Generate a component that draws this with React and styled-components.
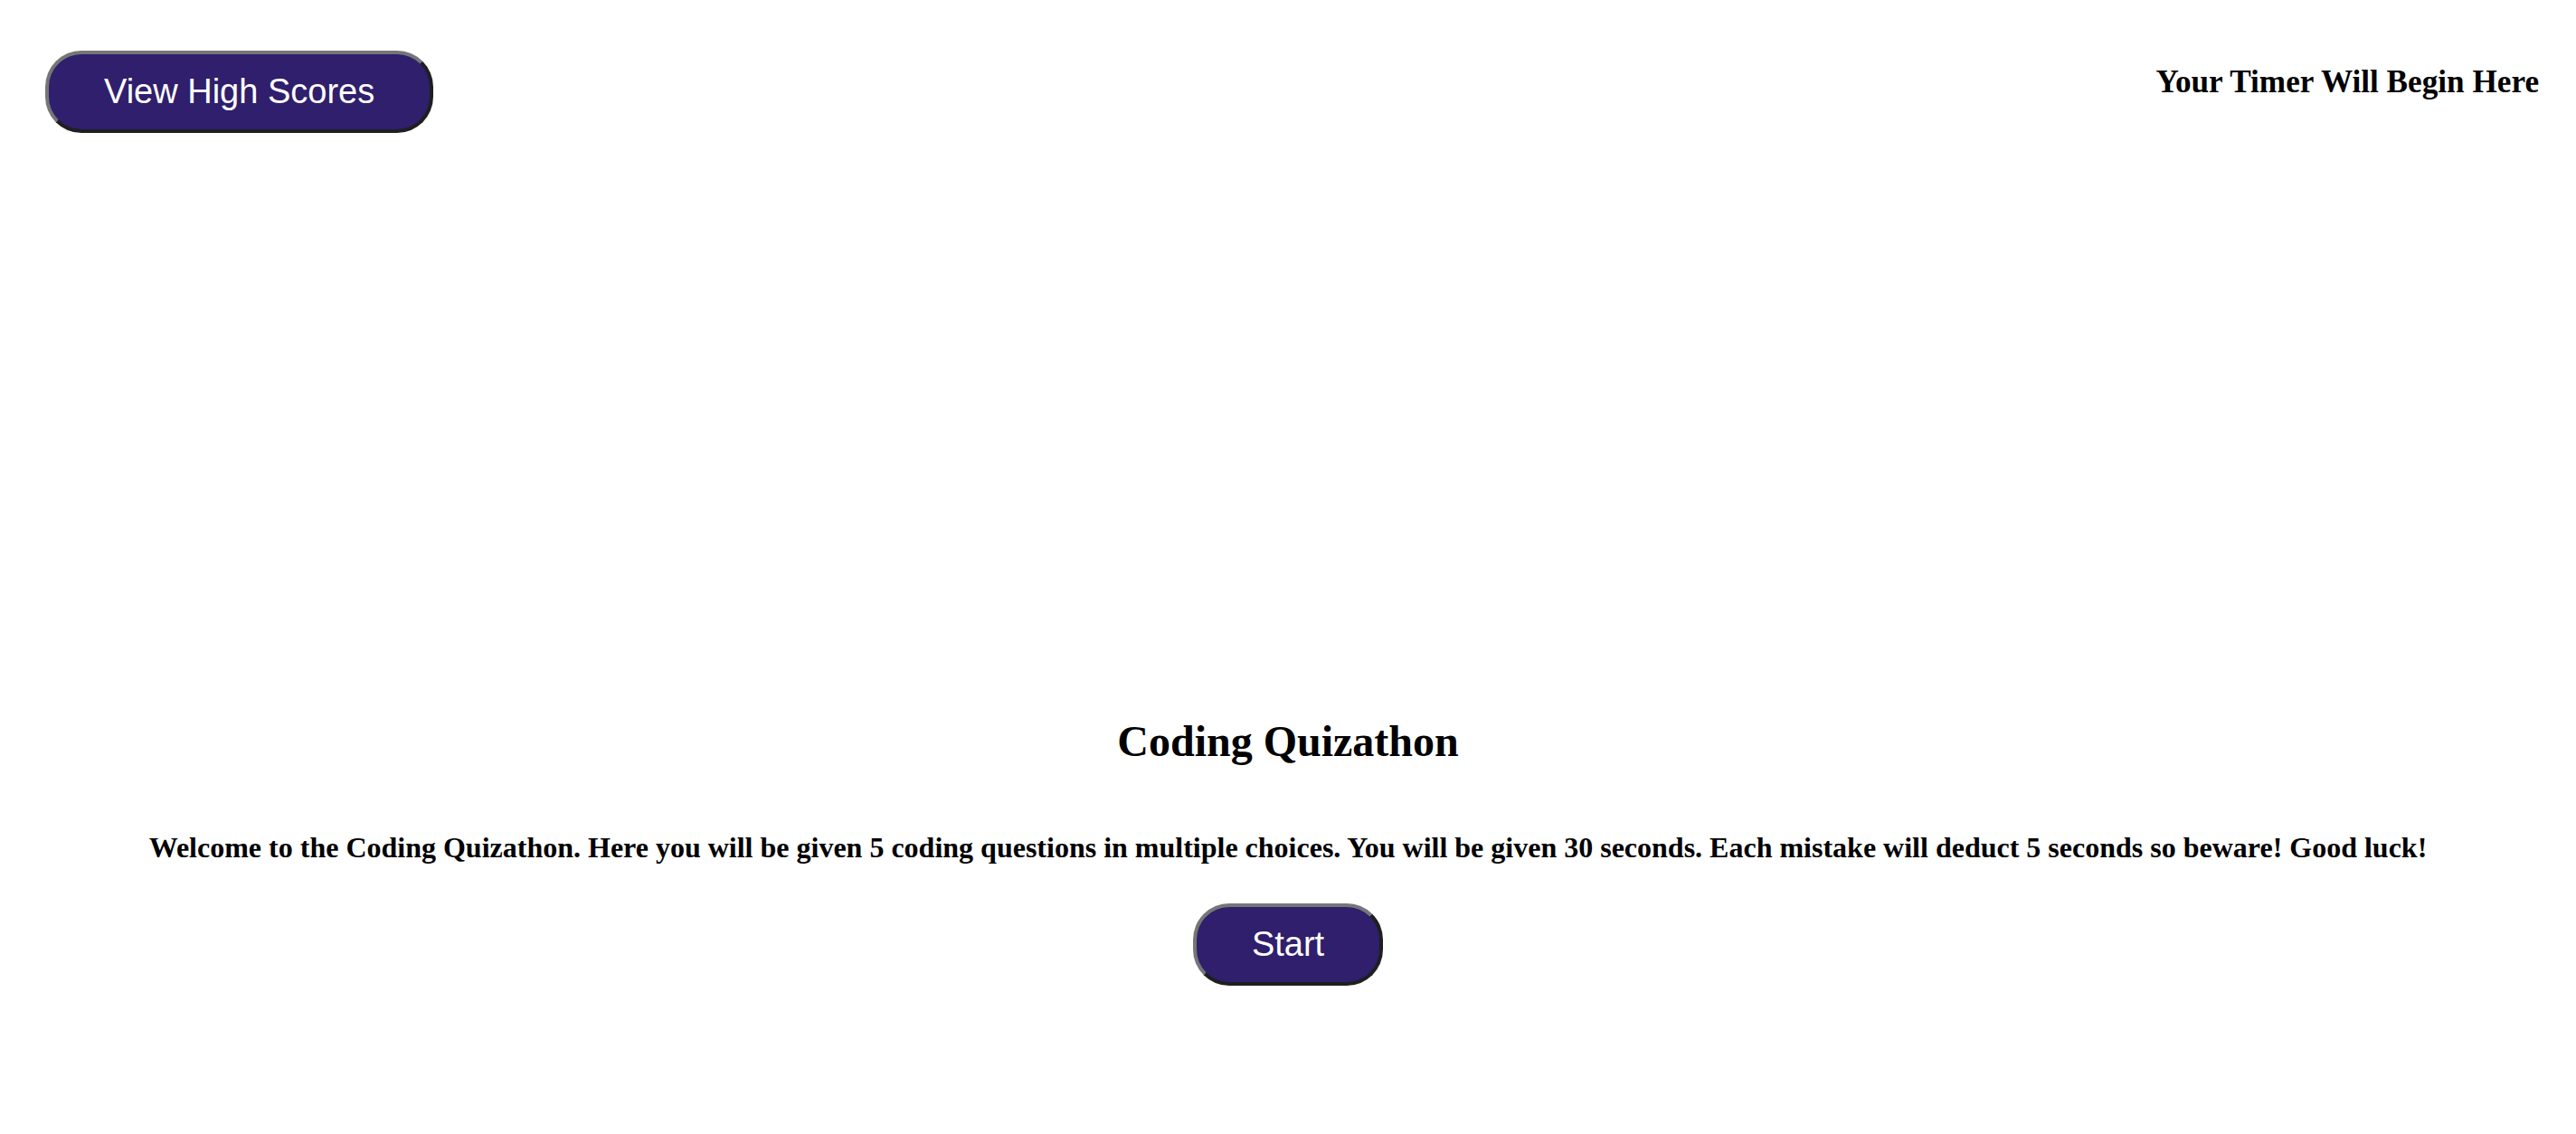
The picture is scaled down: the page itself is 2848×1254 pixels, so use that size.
import React from "react";
import styled, { createGlobalStyle } from "styled-components";

const GlobalStyle = createGlobalStyle`
  html, body {
    margin: 0;
    padding: 0;
    background: #ffffff;
    color: #000000;
    font-family: "Liberation Serif", "Times New Roman", serif;
  }
`;

const Page = styled.div`
  width: 100%;
  min-height: 1254px;
  display: flex;
  flex-direction: column;
`;

const Header = styled.header`
  display: flex;
  justify-content: space-between;
  align-items: flex-start;
  padding: 56px 41px 0 50px;
`;

const PillButton = styled.button`
  font-family: "Liberation Sans", Arial, sans-serif;
  font-size: 38px;
  line-height: 43px;
  color: #ffffff;
  background: #2f1f6c;
  border-width: 4px;
  border-style: solid;
  border-color: #767676 #1f1f1f #1f1f1f #767676;
  border-radius: 40px;
  padding: 20px 61px 20px 61px;
  cursor: pointer;
`;

const Timer = styled.h3`
  margin: 15px 0 0 0;
  font-size: 35.2px;
  font-weight: bold;
  line-height: normal;
`;

const Main = styled.main`
  display: flex;
  flex-direction: column;
  align-items: center;
  padding-top: 645px;
  text-align: center;
`;

const Title = styled.h2`
  margin: 0;
  font-size: 48px;
  font-weight: bold;
  line-height: normal;
`;

const Intro = styled.p`
  margin: 72px 0 0 0;
  font-size: 32px;
  font-weight: bold;
  line-height: normal;
  white-space: nowrap;
`;

const StartRow = styled.div`
  margin-top: 43px;
`;

export default function App() {
  return (
    <Page>
      <GlobalStyle />
      <Header>
        <PillButton>View High Scores</PillButton>
        <Timer>Your Timer Will Begin Here</Timer>
      </Header>
      <Main>
        <Title>Coding Quizathon</Title>
        <Intro>
          Welcome to the Coding Quizathon. Here you will be given 5 coding questions in multiple choices. You will be given 30 seconds. Each mistake will deduct 5 seconds so beware! Good luck!
        </Intro>
        <StartRow>
          <PillButton>Start</PillButton>
        </StartRow>
      </Main>
    </Page>
  );
}
